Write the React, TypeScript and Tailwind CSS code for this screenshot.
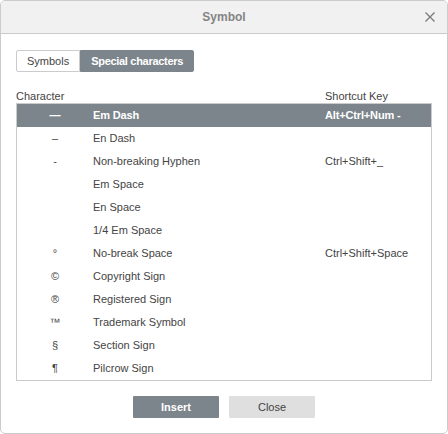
import { useState } from "react";

const rows = [
  { ch: "—", name: "Em Dash", key: "Alt+Ctrl+Num -" },
  { ch: "–", name: "En Dash", key: "" },
  { ch: "-", name: "Non-breaking Hyphen", key: "Ctrl+Shift+_" },
  { ch: "", name: "Em Space", key: "" },
  { ch: "", name: "En Space", key: "" },
  { ch: "", name: "1/4 Em Space", key: "" },
  { ch: "°", name: "No-break Space", key: "Ctrl+Shift+Space" },
  { ch: "©", name: "Copyright Sign", key: "" },
  { ch: "®", name: "Registered Sign", key: "" },
  { ch: "™", name: "Trademark Symbol", key: "" },
  { ch: "§", name: "Section Sign", key: "" },
  { ch: "¶", name: "Pilcrow Sign", key: "" },
];

export default function App() {
  const [sel, setSel] = useState(0);
  const [tab, setTab] = useState(1);

  return (
    <div className="w-[448px] h-[434px] bg-white font-['Liberation_Sans',Arial,sans-serif] text-[11px] text-[#444]">
      <div className="h-full flex flex-col border border-[#cbcbcb] rounded-[5px] overflow-hidden">
        <div className="relative h-[33px] shrink-0 flex items-center justify-center bg-[#f1f1f1] border-b border-[#cbcbcb]">
          <span className="text-[12px] font-bold text-[#848484]">Symbol</span>
          <svg className="absolute right-[12px] top-[11px]" width="10" height="10" viewBox="0 0 10 10">
            <path d="M0.5 0.5L9.5 9.5M9.5 0.5L0.5 9.5" stroke="#7a7a7a" strokeWidth="1.3" />
          </svg>
        </div>

        <div className="flex-1 flex flex-col px-[15px] pt-[16px]">
          <div className="flex h-[22px]">
            {["Symbols", "Special characters"].map((t, i) => (
              <button
                key={t}
                onClick={() => setTab(i)}
                className={
                  tab === i
                    ? "px-[10px] bg-[#7d858c] border border-[#7d858c] text-white font-bold tracking-[-0.3px] rounded-r-[2px]"
                    : "px-[10px] bg-white border border-[#cbcbcb] text-[#444] rounded-l-[2px]"
                }
              >
                {t}
              </button>
            ))}
          </div>

          <div className="flex mt-[17px] h-[14px] leading-[14px]">
            <div className="w-[309px]">Character</div>
            <div>Shortcut Key</div>
          </div>

          <div className="border border-[#cbcbcb] h-[278px]">
            {rows.map((r, i) => (
              <div
                key={r.name}
                onClick={() => setSel(i)}
                className={
                  "flex h-[23px] items-center " +
                  (sel === i ? "bg-[#7d858c] text-white font-bold tracking-[-0.15px]" : "")
                }
              >
                <div className="w-[76px] text-center">{r.ch}</div>
                <div className="w-[232px]">{r.name}</div>
                <div>{r.key}</div>
              </div>
            ))}
          </div>

          <div className="flex justify-center gap-[10px] mt-[15px]">
            <button className="w-[86px] h-[22px] bg-[#7d858c] text-white font-bold rounded-[1px]">Insert</button>
            <button className="w-[86px] h-[22px] bg-[#dfdfdf] text-[#444] rounded-[1px]">Close</button>
          </div>
        </div>
      </div>
    </div>
  );
}
